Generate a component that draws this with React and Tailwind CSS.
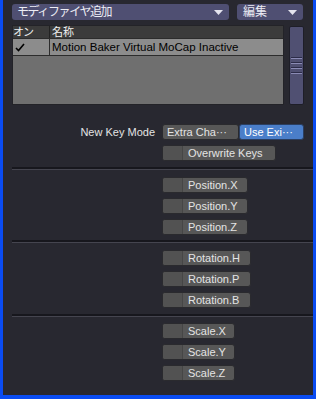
import React from 'react';

const font = { fontFamily: '"Liberation Sans", "Noto Sans CJK JP", sans-serif' };

const Triangle = () => (
  <svg width="9" height="5" viewBox="0 0 9 5" className="shrink-0">
    <path d="M0 0 H9 L4.5 5 Z" fill="#e4e4ee" />
  </svg>
);

const ToggleButton = ({ label, width }) => (
  <div className={`flex h-[16px] ${width} rounded-[3px] border border-[#2a2a2e] bg-[#575757] overflow-hidden`}>
    <div className="w-[20px] h-full bg-[#525252] border-r border-[#464646]" />
    <span className="pl-[5px] text-[11px] leading-[14px] text-[#e4e4e4] whitespace-nowrap">{label}</span>
  </div>
);

const Separator = () => (
  <div className="ml-[9px]">
    <div className="h-[2px] bg-[#17171d]" />
    <div className="h-[1px] bg-[#45454f]" />
  </div>
);

const Group = ({ items, width }) => (
  <div className="flex flex-col gap-[5px] pl-[159px]">
    {items.map((it) => (
      <ToggleButton key={it} label={it} width={width} />
    ))}
  </div>
);

const App = () => {
  return (
    <div
      style={font}
      className="w-[316px] h-[399px] bg-[#282830] border-l-[3px] border-r-[3px] border-b-[4px] border-[#0a4cf2] flex flex-col"
    >
      {/* dropdowns */}
      <div className="flex mt-[4px] pl-[9px]">
        <div className="w-[217px] h-[16px] rounded-[3px] bg-[#4f4f72] flex items-center justify-between pl-[5px] pr-[6px]">
          <span className="text-[12px] leading-[16px] tracking-[-1.4px] text-[#ececf4]">モディファイヤ追加</span>
          <Triangle />
        </div>
        <div className="ml-[8px] w-[66px] h-[16px] rounded-[3px] bg-[#4f4f72] flex items-center justify-between pl-[6px] pr-[6px]">
          <span className="text-[12px] leading-[16px] text-[#ececf4]">編集</span>
          <Triangle />
        </div>
      </div>

      {/* list */}
      <div className="flex mt-[5px] pl-[9px]">
        <div className="w-[272px] h-[80px] border border-[#232328] bg-[#6f6f6f] flex flex-col">
          <div className="flex h-[12px] bg-[#3b3b3b] text-[11px] leading-[12px] text-[#f0f0f0]">
            <div className="w-[37px] border-r border-[#222] tracking-[-1px]">オン</div>
            <div className="pl-[2px]">名称</div>
          </div>
          <div className="flex h-[18px] bg-[#8c8c8c] border-y border-[#2c2c2c] text-black">
            <div className="w-[37px] border-r border-[#2c2c2c] flex items-center pl-[2px]">
              <svg width="10" height="9" viewBox="0 0 10 9">
                <path d="M1 5 L3.5 7.5 L9 1" fill="none" stroke="#000" strokeWidth="1.6" />
              </svg>
            </div>
            <div className="pl-[2px] text-[11.5px] leading-[16px] whitespace-nowrap">Motion Baker Virtual MoCap Inactive</div>
          </div>
        </div>
        <div className="ml-[5px] mt-[1px] w-[15px] h-[79px] rounded-[2px] border border-[#1e1e28] bg-[#505072] flex flex-col items-center pt-[30px] gap-[3px]">
          {[0, 1, 2, 3].map((i) => (
            <div key={i} className="w-[11px]">
              <div className="h-[1px] bg-[#2c2c48]" />
              <div className="h-[1px] bg-[#8a8ab4]" />
            </div>
          ))}
        </div>
      </div>

      {/* new key mode */}
      <div className="flex items-center mt-[19px]">
        <span className="w-[152px] text-right text-[11px] leading-[16px] text-[#e4e4e4]">New Key Mode</span>
        <div className="ml-[7px] flex">
          <div className="w-[77px] h-[16px] rounded-[3px] border border-[#2a2a2e] bg-[#575757] pl-[4px] text-[11px] leading-[14px] text-[#e4e4e4] whitespace-nowrap">
            Extra Cha···
          </div>
          <div className="w-[65px] h-[16px] rounded-[3px] border border-[#2a3e60] bg-[#4a7ec9] pl-[4px] text-[11px] leading-[14px] text-white whitespace-nowrap">
            Use Exi···
          </div>
        </div>
      </div>
      <div className="mt-[5px] pl-[159px]">
        <ToggleButton label="Overwrite Keys" width="w-[114px]" />
      </div>

      <div className="mt-[6px]">
        <Separator />
      </div>
      <div className="mt-[7px]">
        <Group items={['Position.X', 'Position.Y', 'Position.Z']} width="w-[86px]" />
      </div>
      <div className="mt-[5px]">
        <Separator />
      </div>
      <div className="mt-[7px]">
        <Group items={['Rotation.H', 'Rotation.P', 'Rotation.B']} width="w-[89px]" />
      </div>
      <div className="mt-[6px]">
        <Separator />
      </div>
      <div className="mt-[6px]">
        <Group items={['Scale.X', 'Scale.Y', 'Scale.Z']} width="w-[73px]" />
      </div>
    </div>
  );
};

export default App;
